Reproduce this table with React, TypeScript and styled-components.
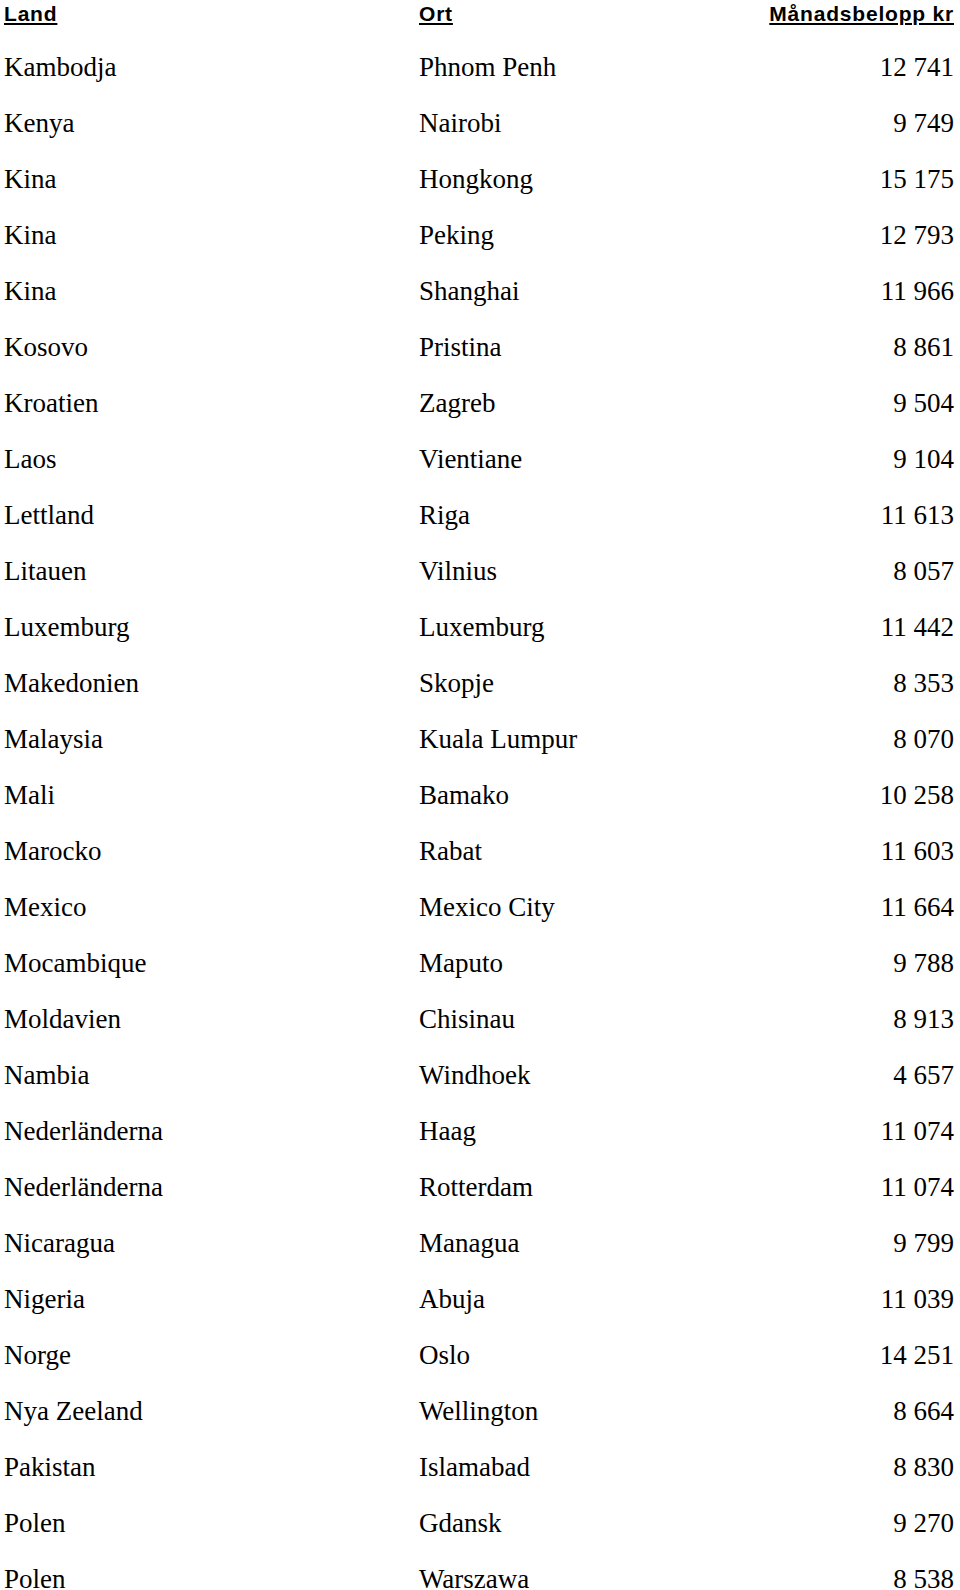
import { Fragment } from "react";
import styled, { createGlobalStyle } from "styled-components";

type Row = { land: string; ort: string; belopp: string };

const rows: Row[] = [
  { land: "Kambodja", ort: "Phnom Penh", belopp: "12 741" },
  { land: "Kenya", ort: "Nairobi", belopp: "9 749" },
  { land: "Kina", ort: "Hongkong", belopp: "15 175" },
  { land: "Kina", ort: "Peking", belopp: "12 793" },
  { land: "Kina", ort: "Shanghai", belopp: "11 966" },
  { land: "Kosovo", ort: "Pristina", belopp: "8 861" },
  { land: "Kroatien", ort: "Zagreb", belopp: "9 504" },
  { land: "Laos", ort: "Vientiane", belopp: "9 104" },
  { land: "Lettland", ort: "Riga", belopp: "11 613" },
  { land: "Litauen", ort: "Vilnius", belopp: "8 057" },
  { land: "Luxemburg", ort: "Luxemburg", belopp: "11 442" },
  { land: "Makedonien", ort: "Skopje", belopp: "8 353" },
  { land: "Malaysia", ort: "Kuala Lumpur", belopp: "8 070" },
  { land: "Mali", ort: "Bamako", belopp: "10 258" },
  { land: "Marocko", ort: "Rabat", belopp: "11 603" },
  { land: "Mexico", ort: "Mexico City", belopp: "11 664" },
  { land: "Mocambique", ort: "Maputo", belopp: "9 788" },
  { land: "Moldavien", ort: "Chisinau", belopp: "8 913" },
  { land: "Nambia", ort: "Windhoek", belopp: "4 657" },
  { land: "Nederländerna", ort: "Haag", belopp: "11 074" },
  { land: "Nederländerna", ort: "Rotterdam", belopp: "11 074" },
  { land: "Nicaragua", ort: "Managua", belopp: "9 799" },
  { land: "Nigeria", ort: "Abuja", belopp: "11 039" },
  { land: "Norge", ort: "Oslo", belopp: "14 251" },
  { land: "Nya Zeeland", ort: "Wellington", belopp: "8 664" },
  { land: "Pakistan", ort: "Islamabad", belopp: "8 830" },
  { land: "Polen", ort: "Gdansk", belopp: "9 270" },
  { land: "Polen", ort: "Warszawa", belopp: "8 538" },
];

const GlobalStyle = createGlobalStyle`
  body {
    margin: 0;
    background: #fff;
    color: #000;
  }
`;

const Table = styled.div`
  display: grid;
  grid-template-columns: 415px 1fr auto;
  padding: 0 6px 0 4px;
  width: 960px;
  box-sizing: border-box;
`;

const HeadCell = styled.div<{ $right?: boolean }>`
  font-family: "Liberation Sans", Arial, sans-serif;
  font-weight: bold;
  font-size: 21px;
  letter-spacing: 0.8px;
  line-height: 28px;
  height: 39px;
  text-decoration: underline;
  text-decoration-thickness: 2px;
  text-underline-offset: 2px;
  text-align: ${({ $right }) => ($right ? "right" : "left")};
  white-space: nowrap;
`;

const Cell = styled.div<{ $right?: boolean }>`
  font-family: "Liberation Serif", "Times New Roman", serif;
  font-size: 27px;
  line-height: 56px;
  height: 56px;
  text-align: ${({ $right }) => ($right ? "right" : "left")};
  white-space: nowrap;
`;

export default function App() {
  return (
    <>
      <GlobalStyle />
      <Table>
        <HeadCell>Land</HeadCell>
        <HeadCell>Ort</HeadCell>
        <HeadCell $right>Månadsbelopp kr</HeadCell>
        {rows.map((r, idx) => (
          <Fragment key={idx}>
            <Cell>{r.land}</Cell>
            <Cell>{r.ort}</Cell>
            <Cell $right>{r.belopp}</Cell>
          </Fragment>
        ))}
      </Table>
    </>
  );
}
